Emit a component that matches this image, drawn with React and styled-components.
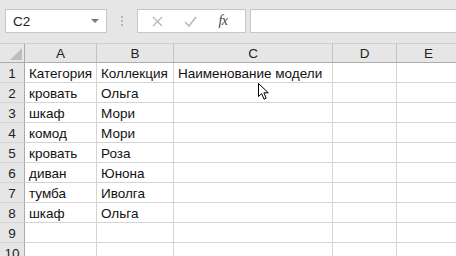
import React from "react";
import styled, { createGlobalStyle } from "styled-components";

const Global = createGlobalStyle`
  html, body { margin: 0; padding: 0; background: #ffffff; overflow: hidden; }
  body { width: 456px; height: 256px; font-family: "Liberation Sans", Arial, sans-serif; }
`;

const Page = styled.div`
  position: relative;
  width: 456px;
  height: 256px;
  overflow: hidden;
  background: #fff;
`;

const FormulaBar = styled.div`
  height: 43px;
  box-sizing: border-box;
  background: #e6e6e6;
  display: flex;
  align-items: flex-start;
  padding: 9px 0 0 5px;
`;

const Box = styled.div`
  height: 24px;
  box-sizing: border-box;
  background: #fff;
  border: 1px solid #c6c6c6;
  display: flex;
  align-items: center;
  flex: none;
`;

const NameBox = styled(Box)`
  width: 102px;
  padding: 0 6px 0 7px;
  justify-content: space-between;
  font-size: 13.5px;
  color: #222;
`;

const Caret = styled.span`
  width: 0;
  height: 0;
  border-left: 4px solid transparent;
  border-right: 4px solid transparent;
  border-top: 4px solid #7a7a7a;
  margin-right: 1px;
`;

const Grip = styled.div`
  width: 30px;
  height: 24px;
  display: flex;
  flex-direction: column;
  align-items: center;
  justify-content: center;
  gap: 2px;
  flex: none;
`;

const Dot = styled.span`
  width: 2px;
  height: 2px;
  background: #b4b4b4;
`;

const FxBox = styled(Box)`
  width: 109px;
  padding: 0 0 0 12px;
`;

const IconSlot = styled.span`
  width: ${(p) => p.$w}px;
  display: flex;
  align-items: center;
  justify-content: center;
  flex: none;
`;

const Fx = styled.span`
  font-family: "Liberation Serif", "Times New Roman", serif;
  font-style: italic;
  font-size: 14px;
  color: #444;
  letter-spacing: -0.5px;
`;

const InputBox = styled(Box)`
  flex: 1;
  margin-left: 4px;
  border-right: none;
`;

const Grid = styled.div`
  display: grid;
  grid-template-columns: 25px 72px 77px 159px 64px 64px;
  grid-auto-rows: 20px;
  width: 461px;
`;

const Corner = styled.div`
  background: #e6e6e6;
  border-top: 1px solid #d0d0d0;
  border-right: 1px solid #ababab;
  border-bottom: 1px solid #ababab;
  box-sizing: border-box;
  display: flex;
  align-items: flex-end;
  justify-content: flex-end;
  padding: 0 2px 2px 0;
`;

const ColHead = styled.div`
  background: #e6e6e6;
  border-top: 1px solid #d0d0d0;
  border-right: 1px solid #c4c4c4;
  border-bottom: 1px solid #ababab;
  box-sizing: border-box;
  display: flex;
  align-items: center;
  justify-content: center;
  font-size: 13.5px;
  color: #222;
`;

const RowHead = styled.div`
  background: #e6e6e6;
  border-right: 1px solid #ababab;
  border-bottom: 1px solid #d4d4d4;
  box-sizing: border-box;
  display: flex;
  align-items: center;
  justify-content: center;
  font-size: 13.5px;
  color: #222;
  padding-top: 1px;
`;

const Cell = styled.div`
  border-right: 1px solid #d4d4d4;
  border-bottom: 1px solid #d4d4d4;
  box-sizing: border-box;
  display: flex;
  align-items: center;
  padding: 1px 0 0 4px;
  font-size: 13.5px;
  color: #111;
  white-space: nowrap;
  overflow: visible;
  position: relative;
  z-index: ${(p) => (p.$spill ? 1 : 0)};
`;

const Pointer = styled.svg`
  position: absolute;
  left: 258px;
  top: 83px;
  z-index: 5;
`;

const cols = ["A", "B", "C", "D", "E"];
const data = [
  ["Категория", "Коллекция", "Наименование модели"],
  ["кровать", "Ольга"],
  ["шкаф", "Мори"],
  ["комод", "Мори"],
  ["кровать", "Роза"],
  ["диван", "Юнона"],
  ["тумба", "Иволга"],
  ["шкаф", "Ольга"],
  [],
  [],
];

export default function App() {
  return (
    <Page>
      <Global />
      <FormulaBar>
        <NameBox>
          <span>C2</span>
          <Caret />
        </NameBox>
        <Grip>
          <Dot />
          <Dot />
          <Dot />
        </Grip>
        <FxBox>
          <IconSlot $w={14}>
            <svg width="11" height="11" viewBox="0 0 11 11">
              <path d="M1 1 L10 10 M10 1 L1 10" stroke="#b9b9b9" strokeWidth="1.3" fill="none" />
            </svg>
          </IconSlot>
          <IconSlot $w={52}>
            <svg width="13" height="11" viewBox="0 0 13 11">
              <path d="M1 6 L5 10 L12 1" stroke="#b9b9b9" strokeWidth="1.6" fill="none" />
            </svg>
          </IconSlot>
          <IconSlot $w={14}>
            <Fx>fx</Fx>
          </IconSlot>
        </FxBox>
        <InputBox />
      </FormulaBar>
      <Grid>
        <Corner>
          <svg width="12" height="12" viewBox="0 0 12 12">
            <path d="M12 0 L12 12 L0 12 Z" fill="#bdbdbd" />
          </svg>
        </Corner>
        {cols.map((c) => (
          <ColHead key={c}>{c}</ColHead>
        ))}
        {data.map((row, r) => (
          <React.Fragment key={r}>
            <RowHead>{r + 1}</RowHead>
            {cols.map((c, i) => (
              <Cell key={c} $spill={!!row[i]}>
                {row[i] || ""}
              </Cell>
            ))}
          </React.Fragment>
        ))}
      </Grid>
      <Pointer width="12" height="18" viewBox="0 0 12 18">
        <path
          d="M0.5 0.5 L0.5 13.5 L3.6 10.6 L6 16.2 L8.2 15.2 L5.9 9.8 L10.3 9.8 Z"
          fill="#fff"
          stroke="#000"
          strokeWidth="1"
          strokeLinejoin="miter"
        />
      </Pointer>
    </Page>
  );
}
